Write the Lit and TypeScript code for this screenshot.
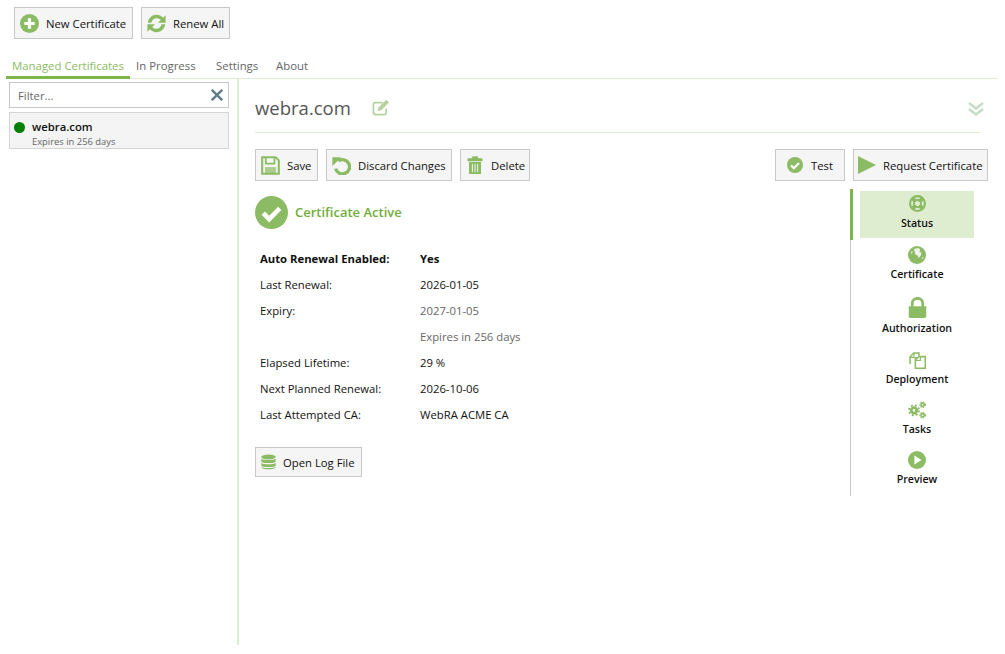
import { LitElement, css, html, svg } from 'lit';
import { customElement } from 'lit/decorators.js';

const GREEN = '#8bbb63';

const icons: Record<string, unknown> = {
    plus: svg`<circle cx="12" cy="12" r="12" fill="${GREEN}"/><path d="M12 5.500v13M5.500 12h13" stroke="#fff" stroke-width="4"/>`,
    renew: svg`<path d="M1 11C1.800 5 6.500 1 12 1c3.500 0 6.300 1.400 8.300 3.600L23.500 1.500V11H14l3.400-3.400C16 6 14.200 5.300 12 5.300 8.700 5.300 6.200 7.600 5.500 11z" fill="${GREEN}"/><path d="M23 13c-.8 6-5.500 10-11 10-3.500 0-6.300-1.400-8.300-3.600L.5 22.500V13H10l-3.400 3.400C8 18 9.800 18.700 12 18.700c3.300 0 5.800-2.300 6.500-5.700z" fill="${GREEN}"/>`,
    save: svg`<path d="M1.500 1.500h17l4 4v17h-21z" fill="none" stroke="${GREEN}" stroke-width="2.600"/><path d="M6 2v7.500h11V2" fill="none" stroke="${GREEN}" stroke-width="2.200"/><path d="M5 14h14v8H5z" fill="${GREEN}" opacity=".7"/>`,
    undo: svg`<path d="M8 6.200A9 9 0 1 1 4.500 16" fill="none" stroke="${GREEN}" stroke-width="4.200"/><path d="M.5 1.500h11.500l-11.500 11z" fill="${GREEN}"/>`,
    trash: svg`<path d="M2.500 3.500h19v3h-19zM8.500 3.500V1h7v2.500" fill="${GREEN}" stroke="${GREEN}"/><path d="M4 8h16v16H4z" fill="${GREEN}"/><path d="M8.500 10.500v11M12 10.500v11M15.500 10.500v11" stroke="#fff" stroke-width="1.200"/>`,
    check: svg`<circle cx="12" cy="12" r="12" fill="${GREEN}"/><path d="M6 12.500l4.300 4.300L18 9" fill="none" stroke="#fff" stroke-width="3.400"/>`,
    play: svg`<path d="M0 0l24 12L0 24z" fill="${GREEN}"/>`,
    db: svg`<ellipse cx="12" cy="4" rx="11.500" ry="4" fill="${GREEN}"/><path d="M.5 6.500c1 3.200 22 3.200 23 0V11c-1 3.500-22 3.500-23 0zM.5 13c1 3.200 22 3.200 23 0v4.500c-1 3.500-22 3.500-23 0z" fill="${GREEN}"/><path d="M.5 19.500c1 3 22 3 23 0v.500c-1 5-22 5-23 0z" fill="${GREEN}"/>`,
    ring: svg`<circle cx="12" cy="12" r="10.500" fill="none" stroke="${GREEN}" stroke-width="3"/><circle cx="12" cy="12" r="5" fill="none" stroke="${GREEN}" stroke-width="2.600"/><path d="M4.500 4.500l5 5M19.500 4.500l-5 5M4.500 19.500l5-5M19.500 19.500l-5-5" stroke="${GREEN}" stroke-width="5.500"/>`,
    globe: svg`<circle cx="12" cy="12" r="12" fill="${GREEN}"/><path d="M8 4l6-1.500 2.500 2.500-1.500 3 3 .500-1 4.500-3 3-1-3.500-3-1-1-3.500zM18.500 15.500l2.500-1.500-1.500 3.500zM3.500 8l2.500-1.500-.500 4z" fill="#fff" opacity=".85"/>`,
    lock: svg`<path d="M6 11V7.500a6 6 0 0 1 12 0V11" fill="none" stroke="${GREEN}" stroke-width="3.200"/><path d="M2 10.500h20V22a2 2 0 0 1-2 2H4a2 2 0 0 1-2-2z" fill="${GREEN}"/>`,
    copy: svg`<path d="M1.500 17V7l5-5.500H14v6" fill="none" stroke="${GREEN}" stroke-width="2.200"/><path d="M1.500 7.500H7V1.500" fill="none" stroke="${GREEN}" stroke-width="1.600"/><path d="M9 8h5l3-1.500h6V23H9z" fill="#fff" stroke="${GREEN}" stroke-width="2.200"/><path d="M9 13V12l5-5.500h2V12H9" fill="#fff" stroke="${GREEN}" stroke-width="1.600"/>`,
    cogs: svg`<circle cx="8" cy="12.500" r="3.600" fill="none" stroke="${GREEN}" stroke-width="3.800"/><circle cx="8" cy="12.500" r="6.700" fill="none" stroke="${GREEN}" stroke-width="2.400" stroke-dasharray="2.600 2.700"/><circle cx="19.500" cy="5" r="2.200" fill="none" stroke="${GREEN}" stroke-width="2.200"/><circle cx="19.500" cy="5" r="3.800" fill="none" stroke="${GREEN}" stroke-width="1.400" stroke-dasharray="1.800 1.800"/><circle cx="19.500" cy="19" r="2.200" fill="none" stroke="${GREEN}" stroke-width="2.200"/><circle cx="19.500" cy="19" r="3.800" fill="none" stroke="${GREEN}" stroke-width="1.400" stroke-dasharray="1.800 1.800"/>`,
    preview: svg`<circle cx="12" cy="12" r="12" fill="${GREEN}"/><path d="M8.500 6l9.500 6-9.500 6z" fill="#fff"/>`,
    edit: svg`<path d="M20 13.500V19a3 3 0 0 1-3 3H5a3 3 0 0 1-3-3V8a3 3 0 0 1 3-3h10" fill="none" stroke="#b5d29d" stroke-width="2.400"/><path d="M8 17l1.200-5L20 1l4 4-11 11z" fill="#b5d29d"/>`,
};

const icon = (name: string, w: number, h = w) =>
    html`<svg class="icon" width=${w} height=${h} viewBox="0 0 24 24">${icons[name]}</svg>`;

@customElement('app-root')
export class AppRoot extends LitElement
{
    private nav = [
        ['ring', 'Status', 17, 0],
        ['globe', 'Certificate', 18, 8],
        ['lock', 'Authorization', 21, 15],
        ['copy', 'Deployment', 17, 16],
        ['cogs', 'Tasks', 18, 14],
        ['preview', 'Preview', 18, 14],
    ] as [string, string, number, number][];

    private rows = [
        ['Last Renewal:', '2026-01-05', ''],
        ['Expiry:', '2027-01-05', 'muted'],
        ['', 'Expires in 256 days', 'muted'],
        ['Elapsed Lifetime:', '29 %', ''],
        ['Next Planned Renewal:', '2026-10-06', ''],
        ['Last Attempted CA:', 'WebRA ACME CA', ''],
    ];

    protected render(): unknown
    {
        return html`
<div class="toolbar">
    <button class="btn" style="width:119px">${icon('plus', 19)}<span>New Certificate</span></button>
    <button class="btn" style="width:89px">${icon('renew', 19)}<span>Renew All</span></button>
</div>
<div class="tabs">
    <div class="tab active">Managed Certificates</div>
    <div class="tab" style="width:80px">In Progress</div>
    <div class="tab" style="width:60px">Settings</div>
    <div class="tab">About</div>
</div>
<div class="main">
    <aside class="side">
        <div class="filter"><span>Filter...</span>
            <svg width="12" height="12" viewBox="0 0 12 12"><path d="M.8.8l10.400 10.400M11.200.8L.8 11.200" stroke="#607d8b" stroke-width="2.400"/></svg>
        </div>
        <div class="item">
            <i class="dot"></i>
            <div>
                <div class="name">webra.com</div>
                <div class="sub">Expires in 256 days</div>
            </div>
        </div>
    </aside>
    <section class="detail">
        <header class="head">
            <h1>webra.com</h1>
            ${icon('edit', 17)}
            <svg class="chev" width="16" height="14" viewBox="0 0 16 14"><path d="M1 1l7 5.500L15 1M1 7l7 5.500L15 7" fill="none" stroke="#c4dcc4" stroke-width="2.400"/></svg>
        </header>
        <div class="actions">
            <button class="btn" style="width:63px">${icon('save', 19)}<span>Save</span></button>
            <button class="btn" style="width:126px">${icon('undo', 19)}<span>Discard Changes</span></button>
            <button class="btn" style="width:70px">${icon('trash', 18)}<span>Delete</span></button>
            <div class="grow"></div>
            <button class="btn test" style="width:70px">${icon('check', 16)}<span>Test</span></button>
            <button class="btn req" style="width:135px">${icon('play', 18)}<span>Request Certificate</span></button>
        </div>
        <div class="body">
            <div class="status">
                <div class="banner">${icon('check', 33)}<span>Certificate Active</span></div>
                <div class="table">
                    <div class="row strong"><span>Auto Renewal Enabled:</span><span>Yes</span></div>
                    ${this.rows.map(([k, v, c]) => html`<div class="row"><span>${k}</span><span class=${c}>${v}</span></div>`)}
                </div>
                <button class="btn log" style="width:107px">${icon('db', 15, 16)}<span>Open Log File</span></button>
            </div>
            <nav class="nav">
                ${this.nav.map(([ic, label, s, gap], i) => html`
                <div class="nav-item ${i === 0 ? 'on' : ''}" style="margin-top:${gap}px">
                    ${icon(ic, s)}<span>${label}</span>
                </div>`)}
            </nav>
        </div>
    </section>
</div>
        `;
    }

    static styles = css`
:host {
    display: block;
    height: 654px;
    overflow: hidden;
    background: #fff;
    color: #111;
    font-family: "Open Sans", "Noto Sans", sans-serif;
    font-size: 11.3px;
}

.toolbar {
    display: flex;
    gap: 8px;
    padding: 7px 0 0 14px;
    height: 32px;
}

.btn {
    display: flex;
    align-items: center;
    gap: 7px;
    box-sizing: border-box;
    height: 32px;
    padding: 0 0 0 5px;
    background: #f5f5f5;
    border: 1px solid #c8c8c8;
    color: #111;
    font: inherit;
    white-space: nowrap;
}

.btn.test {
    gap: 8px;
    padding-left: 11px;
}

.btn.req {
    padding-left: 4px;
}

.icon {
    flex: none;
    display: block;
}

.tabs {
    display: flex;
    margin: 17px 7px 0 6px;
    height: 23px;
    box-sizing: border-box;
    border-bottom: 1px solid #deecd0;
    color: #666;
    font-size: 11.4px;
}

.tab {
    padding: 2px 6px 0;
    height: 22px;
    box-sizing: border-box;
}

.tab.active {
    width: 124px;
    color: #8bbb63;
    border-bottom: 3px solid #7ab648;
    height: 23px;
    white-space: nowrap;
}

.main {
    display: flex;
    height: 566px;
}

.side {
    width: 229px;
    box-sizing: border-box;
    padding: 3px 0 0 9px;
}

.filter {
    display: flex;
    align-items: center;
    justify-content: space-between;
    box-sizing: border-box;
    width: 220px;
    height: 26px;
    padding: 0 5px 0 8px;
    border: 1px solid #c8c8c8;
    color: #666;
}

.item {
    display: flex;
    gap: 7px;
    box-sizing: border-box;
    width: 220px;
    height: 37px;
    margin-top: 4px;
    padding: 6px 4px;
    background: #f4f4f4;
    border: 1px solid #d4d4d4;
}

.dot {
    width: 11px;
    height: 11px;
    margin-top: 3px;
    border-radius: 50%;
    background: #008000;
}

.name {
    font-weight: 600;
    line-height: 15px;
}

.sub {
    color: #666;
    font-size: 9.400px;
    line-height: 15px;
}

.detail {
    flex: 1;
    min-width: 0;
    margin-left: 8px;
    padding: 0 17px 0 16px;
    border-left: 2px solid #deecd0;
}

.head {
    display: flex;
    align-items: center;
    gap: 21px;
    height: 54px;
    width: 725px;
    box-sizing: border-box;
    padding-top: 3px;
    border-bottom: 1px solid #deecd0;
}

.head h1 {
    margin: 0;
    color: #555;
    font-size: 18.500px;
    font-weight: 400;
}

.chev {
    margin-left: auto;
    margin-right: -4px;
    margin-top: 3px;
}

.actions {
    display: flex;
    gap: 8px;
    margin-top: 16px;
}

.grow {
    flex: 1;
}

.body {
    display: flex;
    margin-top: 8px;
}

.status {
    flex: 1;
    padding-top: 7px;
}

.banner {
    display: flex;
    align-items: center;
    gap: 7px;
    color: #6fae38;
    font-size: 13px;
    font-weight: 600;
}

.banner span {
    padding-bottom: 2px;
}

.table {
    margin: 17px 0 0 5px;
}

.row {
    display: grid;
    grid-template-columns: 160px 1fr;
    height: 26px;
    line-height: 26px;
}

.strong {
    font-weight: 700;
}

.muted {
    color: #666;
}

.btn.log {
    height: 30px;
    margin-top: 19px;
}

.nav {
    position: relative;
    width: 138px;
    height: 307px;
    box-sizing: border-box;
    border-left: 1px solid #c8c8c8;
}

.nav-item {
    display: flex;
    flex-direction: column;
    align-items: center;
    gap: 2px;
    width: 114px;
    margin-left: 9px;
    font-size: 10.600px;
    font-weight: 600;
    line-height: 16px;
}

.nav-item.on {
    box-sizing: border-box;
    height: 47px;
    margin-top: 2px !important;
    padding-top: 4px;
    gap: 3px;
    background: #deecd0;
}

.nav-item.on::before {
    content: "";
    position: absolute;
    left: -1px;
    top: 0;
    width: 3px;
    height: 51px;
    background: #7ab648;
}
`;
}
